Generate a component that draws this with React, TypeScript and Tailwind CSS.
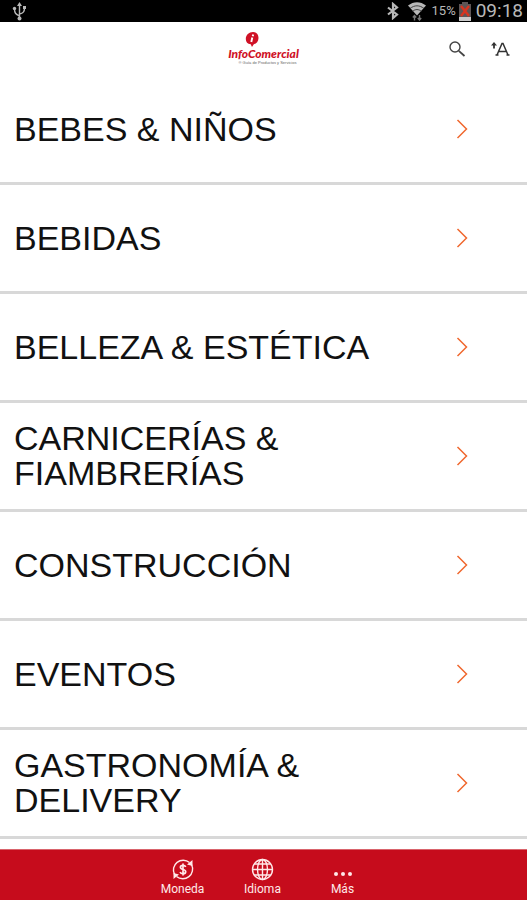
import type { ReactNode } from 'react';

const categories = [
  'BEBES & NIÑOS',
  'BEBIDAS',
  'BELLEZA & ESTÉTICA',
  'CARNICERÍAS & FIAMBRERÍAS',
  'CONSTRUCCIÓN',
  'EVENTOS',
  'GASTRONOMÍA & DELIVERY',
];

function StatusBar() {
  return (
    <div className="flex h-[22px] shrink-0 items-center justify-between bg-black pr-1 pl-3 font-['Roboto',sans-serif] text-[#b8b8b8]">
      <svg width="15" height="20" viewBox="0 0 15 20" fill="none" stroke="currentColor" strokeWidth="1.4">
        <path d="M7.5 4v13M7.5 15C4 13 2.5 12.5 2.5 8M7.5 13c3.5-1 5-2 5-6" />
        <path d="M7.5 1 10 5H5z" fill="currentColor" stroke="none" />
        <circle cx="2.5" cy="7.5" r="1.7" fill="currentColor" stroke="none" />
        <path d="M11 5h3v3h-3z" fill="currentColor" stroke="none" />
        <circle cx="7.5" cy="17.5" r="2" fill="currentColor" stroke="none" />
      </svg>
      <div className="flex items-center">
        <svg className="mr-2" width="14" height="18" viewBox="0 0 14 18" fill="none" stroke="currentColor" strokeWidth="2.2">
          <path d="m2 5.500 9 7L7 16V2l4 3.500-9 7" />
        </svg>
        <svg className="mr-1.5" width="18" height="20" viewBox="0 0 18 20" fill="none" stroke="currentColor">
          <path d="M0 4.500C5.500 0 12.500 0 18 4.500L9 14.500z" fill="currentColor" stroke="none" />
          <path d="M2 7.500c4.500-3.600 9.500-3.600 14 0M4.500 10.300c3-2.300 6-2.300 9 0" stroke="#333" strokeWidth="0.900" />
          <path d="M6.500 19.500V14M4.800 16.500l1.700-2 1.700 2M11.500 14v5.500M9.800 17l1.700 2 1.700-2" stroke="#777" strokeWidth="1.400" />
        </svg>
        <span className="text-[13px] leading-5">15%</span>
        <svg className="mr-1 ml-0.5" width="14" height="19" viewBox="0 0 14 19">
          <path d="M4 0h6v2h3v17H1V2h3z" fill="#5d5555" />
          <path d="M1 15h12v4H1z" fill="#c9c9c9" />
          <path d="m3 4 8 10M11 4 3 14" stroke="#d8341f" strokeWidth="2.400" />
        </svg>
        <span className="text-[19px] leading-5">09:18</span>
      </div>
    </div>
  );
}

function Logo() {
  return (
    <div className="flex flex-col items-center pt-[10px]">
      <svg className="mr-6" width="14" height="15" viewBox="0 0 14 15">
        <path d="M8 0c3.700 0 5.500 2.800 5.500 6 0 3.600-2.200 5.800-4.700 6.300L7 15l-1.300-2.700C2.500 12 .8 10 .8 7 .8 3 4 0 8 0z" fill="#cf1126" />
        <path d="M8.200 2.500 7.700 4.300M7.300 5.500 6.300 10" stroke="#fff" strokeWidth="1.900" />
      </svg>
      <span className="font-['Lato',sans-serif] text-[12px] leading-[13px] font-black text-[#cf1126] italic">InfoComercial</span>
      <span className="pl-2 text-[4px] leading-[5px] text-[#666]">® Guía de Productos y Servicios</span>
    </div>
  );
}

function Header() {
  return (
    <header className="grid h-[54px] shrink-0 grid-cols-[1fr_auto_1fr] items-start">
      <div />
      <Logo />
      <div className="flex justify-end gap-6 pt-[18px] pr-[17px]">
        <button type="button" aria-label="Buscar">
          <svg width="18" height="18" viewBox="0 0 18 18" fill="none" stroke="#444" strokeWidth="1.400">
            <circle cx="7" cy="7" r="5" />
            <path d="m10.800 10.800 5.700 5.200" strokeWidth="1.800" />
          </svg>
        </button>
        <button type="button" aria-label="Tamaño de texto">
          <svg width="20" height="18" viewBox="0 0 20 18" fill="none" stroke="#333" strokeWidth="1.500">
            <path d="m7 15 5-11.500h1L18 15M9 11.500h7M5.500 15h3M16.500 15h3" />
            <path d="M4 8.500V3" strokeWidth="1.800" />
            <path d="M1 5.500 4 2l3 3.500z" fill="#333" stroke="none" />
          </svg>
        </button>
      </div>
    </header>
  );
}

function CategoryRow({ name }: { name: string }) {
  return (
    <li className="border-b-[3px] border-[#d8d8d8]">
      <button type="button" className="flex h-[106px] w-full items-center justify-between pr-[59px] pl-3.5 text-left">
        <span className="w-[360px] text-[34px] leading-[35px] text-[#111]">{name}</span>
        <svg width="12" height="20" viewBox="0 0 12 20" fill="none" stroke="#f0682f" strokeWidth="1.500">
          <path d="m1.500 1 9 9-9 9" />
        </svg>
      </button>
    </li>
  );
}

function NavItem({ label, children }: { label: string; children: ReactNode }) {
  return (
    <button type="button" className="flex w-20 flex-col items-center pt-2 text-[#ffe9e9]">
      {children}
      <span className="text-[12px] leading-4">{label}</span>
    </button>
  );
}

function BottomNav() {
  return (
    <nav className="flex h-[51px] shrink-0 justify-center border-t border-[#d9646c] bg-[#c60c1c] pr-0.5 font-['Roboto',sans-serif]">
      <NavItem label="Moneda">
        <svg width="24" height="23" viewBox="0 0 24 23" fill="none" stroke="currentColor" strokeWidth="1.400">
          <path d="M18.500 4.500A9.800 9.800 0 0 0 3.500 16.500M5.500 18.500A9.800 9.800 0 0 0 20.500 6.500" />
          <path d="M21.500 2v6l-5.500-1.500zM2.500 21v-6l5.500 1.500z" fill="currentColor" stroke="none" />
          <path d="M14.700 9c-.4-1.200-1.300-1.700-2.700-1.700-1.500 0-2.600.7-2.600 2 0 3.100 5.300 1.300 5.300 4.400 0 1.300-1.100 2-2.700 2-1.500 0-2.500-.6-2.900-1.800M12 5.500v12" strokeWidth="1.700" />
        </svg>
      </NavItem>
      <NavItem label="Idioma">
        <svg width="23" height="23" viewBox="0 0 23 23" fill="none" stroke="currentColor" strokeWidth="1.400">
          <circle cx="11.500" cy="11.500" r="10" />
          <ellipse cx="11.500" cy="11.500" rx="5" ry="10" />
          <path d="M11.500 1.500v20M1.500 11.500h20M3.500 6h16M3.500 17h16" />
        </svg>
      </NavItem>
      <NavItem label="Más">
        <svg width="20" height="23" viewBox="0 0 20 23" fill="currentColor">
          <circle cx="3" cy="16" r="2" />
          <circle cx="10" cy="16" r="2" />
          <circle cx="17" cy="16" r="2" />
        </svg>
      </NavItem>
    </nav>
  );
}

export default function App() {
  return (
    <div className="flex h-screen flex-col bg-white font-['Liberation_Sans',Arial,sans-serif]">
      <StatusBar />
      <Header />
      <main className="min-h-0 flex-1 overflow-y-auto [scrollbar-width:none]">
        <ul>
          {categories.map((name) => (
            <CategoryRow key={name} name={name} />
          ))}
        </ul>
      </main>
      <BottomNav />
    </div>
  );
}
